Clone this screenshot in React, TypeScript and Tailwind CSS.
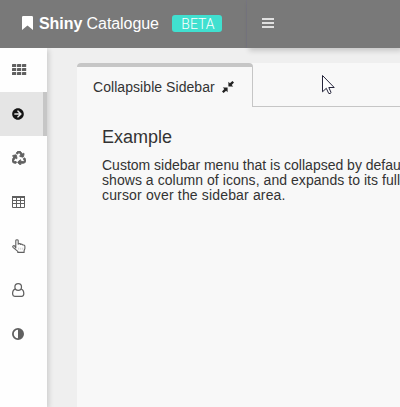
import type { ReactNode } from "react";
import { FaArrowCircleRight, FaRecycle } from "react-icons/fa";

function GridIcon() {
  return (
    <svg className="mt-[-1px]" width="15" height="12" viewBox="0 0 15 12" fill="currentColor">
      {[0, 4, 8].map((y) =>
        [0, 5, 10].map((x) => <rect key={`${x}-${y}`} x={x} y={y + 0.1} width="4.2" height="3" rx="0.3" />),
      )}
    </svg>
  );
}

function TableIcon() {
  return (
    <svg width="13" height="12" viewBox="0 0 13 12" fill="none" stroke="currentColor">
      <path d="M0 1h13" strokeWidth="2" />
      <path d="M.5 1v10.5h12V1M0 4.5h13M0 7.5h13M4.5 1v10M8.5 1v10" />
    </svg>
  );
}

function HandIcon() {
  return (
    <svg width="14" height="14" viewBox="0 0 14 14" fill="none" stroke="currentColor" strokeWidth="1.1" strokeLinejoin="round">
      <path d="M3.8 9V1.8C3.8.3 6.2.3 6.2 1.8v3.4C7.2 4.3 8.3 4.6 8.7 5.4c.9-.5 1.8-.1 2.2.7 1.1-.4 2 .2 2 1.3v1.8c0 1.1-.6 1.7-.8 2.6v1.6H5.8v-1L1 8.3C.2 7.1 1.7 6 2.7 7z" />
      <path d="M6.7 8.7v2M8.7 8.7v2M10.7 8.7v2" strokeWidth=".6" strokeOpacity=".5" />
    </svg>
  );
}

function PersonIcon() {
  return (
    <svg width="13" height="14" viewBox="0 0 13 14" fill="none" stroke="currentColor" strokeWidth="1.25">
      <circle cx="6.2" cy="4" r="3.3" />
      <path d="M3.2 6.2C1.3 6.7.6 8.8.6 10.8c0 1.5.9 2.5 2.2 2.5h6.8c1.3 0 2.2-1 2.2-2.5 0-2-.7-4.1-2.6-4.6" />
    </svg>
  );
}

function ContrastIcon() {
  return (
    <svg width="12" height="12" viewBox="0 0 12 12" fill="currentColor">
      <circle cx="6" cy="6" r="5.1" fill="none" stroke="currentColor" strokeWidth="1.8" />
      <path d="M6 1a5 5 0 0 1 0 10z" />
    </svg>
  );
}

function SidebarItem({ children, active = false }: { children: ReactNode; active?: boolean }) {
  return (
    <a
      className={
        active
          ? "flex h-11 items-center border-r-4 border-[#c6c6c6] bg-[#e5e5e5] pl-3 text-[#151515]"
          : "flex h-11 items-center pl-3 text-[#606060]"
      }
    >
      {children}
    </a>
  );
}

export default function App() {
  return (
    <div className="flex h-[407px] w-[400px] flex-col overflow-hidden bg-[#efefef] font-['Liberation_Sans',Arial,sans-serif] text-[#333]">
      <header className="flex h-12 shrink-0 bg-[#797979] text-white">
        <div className="relative z-20 flex w-[247px] shrink-0 items-center border-r border-[#777680] bg-[#797979] pl-[22px]">
          <svg className="mt-[-2px] shrink-0" width="11" height="14" viewBox="0 0 11 14" fill="currentColor">
            <path d="M1.2 0h8.6Q11 0 11 1.2V14L5.5 9.5 0 14V1.2Q0 0 1.2 0Z" />
          </svg>
          <span className="ml-[6px] mt-[-1px] whitespace-nowrap text-[16px] leading-5 tracking-[-0.07px]">
            <b>Shiny</b> Catalogue
          </span>
          <span className="absolute left-[172px] top-[15px] flex h-[17px] w-[50px] items-center justify-center rounded-[3px] bg-[#40e0d0] pl-[2px] pt-[2px] font-[Roboto,sans-serif] text-[14px] font-light leading-[17px]">
            BETA
          </span>
        </div>
        <div className="relative z-20 grow bg-[#797979] pl-[15px] pt-[18px] shadow-[2px_3px_5px_rgba(0,0,0,0.16)]">
          <svg width="12" height="10" viewBox="0 0 12 10" fill="#e0e0e0">
            <path d="M0 0h12v2H0zM0 4h12v2H0zM0 8h12v2H0z" />
          </svg>
        </div>
      </header>
      <div className="flex min-h-0 grow">
        <nav className="z-10 w-[47px] shrink-0 bg-[#fefefe] shadow-[2px_2px_5px_rgba(0,0,0,0.14)]">
          <SidebarItem><GridIcon /></SidebarItem>
          <SidebarItem active><FaArrowCircleRight size={12} /></SidebarItem>
          <SidebarItem><FaRecycle size={14} stroke="currentColor" strokeWidth={32} /></SidebarItem>
          <SidebarItem><TableIcon /></SidebarItem>
          <SidebarItem><HandIcon /></SidebarItem>
          <SidebarItem><PersonIcon /></SidebarItem>
          <SidebarItem><ContrastIcon /></SidebarItem>
        </nav>
        <main className="ml-[30px] mt-[15px] w-[323px] shrink-0 rounded-tl-[4px] bg-[#f8f8f8]">
          <div className="flex h-11">
            <div className="flex w-44 items-center rounded-t-[4px] border-r border-t-4 border-[#c6c6c6] pl-4 text-[14px]">
              <span className="whitespace-nowrap tracking-[0.06px]">Collapsible Sidebar</span>
              <svg className="ml-[7px]" width="12" height="12" viewBox="0 0 12 12" fill="#222">
                <path d="M6.4 5.6V.8L7.9 2.3 10.4 0 12 1.6 9.7 4.1l1.5 1.5zM5.6 6.4v4.8L4.1 9.7 1.6 12 0 10.4 2.3 7.9.8 6.4z" />
              </svg>
            </div>
            <div className="grow border-b border-[#c6c6c6]" />
          </div>
          <div className="w-[480px] pl-[25px] pt-5">
            <h4 className="text-[18px] leading-5">Example</h4>
            <p className="mt-[11px] whitespace-nowrap text-[14px] leading-[15px]">
              Custom sidebar menu that is collapsed by default
              <br />
              <span className="tracking-[0.05px]">shows a column of icons, and expands to its full</span>
              <br />
              <span className="tracking-[0.16px]">cursor over the sidebar area.</span>
            </p>
          </div>
        </main>
      </div>
      <svg className="absolute left-[322px] top-[75px] z-30" width="13" height="20" viewBox="0 0 13 20" fill="white" stroke="#25253b">
        <path d="M.5.5v16.3l3.8-3.5 2.4 5.1q1.5.7 2.4-.8L6.8 12.5h5.4z" />
      </svg>
    </div>
  );
}
